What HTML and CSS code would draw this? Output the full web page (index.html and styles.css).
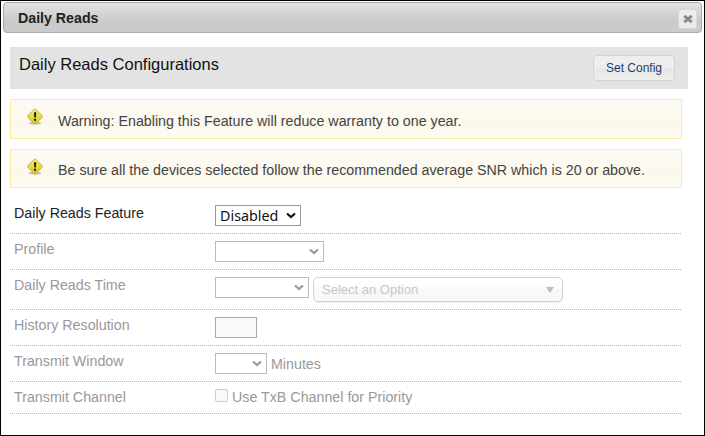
FILE: index.html
```html
<!DOCTYPE html>
<html lang="en">
<head>
<meta charset="utf-8">
<title>Daily Reads</title>
<link rel="stylesheet" href="styles.css">
</head>
<body>
<svg class="defs" aria-hidden="true">
  <defs>
    <linearGradient id="gold" x1="0" y1="0" x2="1" y2="1"><stop offset="0" stop-color="#f8f38a"/><stop offset="0.5" stop-color="#e6dc40"/><stop offset="1" stop-color="#d0c01f"/></linearGradient>
    <symbol id="warn" viewBox="0 0 18 18">
      <ellipse cx="9" cy="15.2" rx="6" ry="1.6" fill="#aaa896" opacity=".7"/>
      <rect x="3.4" y="2.9" width="11.2" height="11.2" rx="1.3" transform="rotate(45 9 8.5)" fill="url(#gold)" stroke="#c4b030" stroke-width=".9"/>
      <path d="M8 4.2h2.2L9.9 9.5H8.3zM8 10.7h2v2H8z" fill="#1a1a1a"/>
    </symbol>
    <symbol id="chev" viewBox="0 0 10 7"><path d="M1 1.5L5 5L9 1.5" fill="none" stroke="currentColor" stroke-width="2.2"/></symbol>
  </defs>
</svg>
<div class="dialog">
  <header class="titlebar">
    <span class="title">Daily Reads</span>
    <button class="close" aria-label="Close"><svg width="10" height="10" viewBox="0 0 10 10"><path d="M1.3 1.8L8.7 8.2M8.7 1.8L1.3 8.2" stroke="#888" stroke-width="3"/></svg></button>
  </header>
  <main class="content">
    <div class="heading"><h1>Daily Reads Configurations</h1><button class="set">Set Config</button></div>
    <div class="notice first"><svg class="icon"><use href="#warn"/></svg><span>Warning: Enabling this Feature will reduce warranty to one year.</span></div>
    <div class="notice"><svg class="icon"><use href="#warn"/></svg><span>Be sure all the devices selected follow the recommended average SNR which is 20 or above.</span></div>
    <div class="form">
      <div class="row on"><label>Daily Reads Feature</label><div class="field"><div class="select w86"><span>Disabled</span><svg class="chev"><use href="#chev"/></svg></div></div></div>
      <div class="row"><label>Profile</label><div class="field"><div class="select w109"><svg class="chev"><use href="#chev"/></svg></div></div></div>
      <div class="row tall"><label>Daily Reads Time</label><div class="field"><div class="select w94"><svg class="chev"><use href="#chev"/></svg></div><div class="chosen"><span>Select an Option</span><i></i></div></div></div>
      <div class="row"><label>History Resolution</label><div class="field"><div class="input"></div></div></div>
      <div class="row"><label>Transmit Window</label><div class="field"><div class="select w52"><svg class="chev"><use href="#chev"/></svg></div><span class="txt">Minutes</span></div></div>
      <div class="row short"><label>Transmit Channel</label><div class="field"><div class="check"></div><span class="txt up">Use TxB Channel for Priority</span></div></div>
    </div>
  </main>
</div>
</body>
</html>
```
FILE: styles.css
```css
* { box-sizing: border-box; }
body { margin: 0; background: #fff; font-family: "Liberation Sans", Arial, sans-serif; font-size: 14.25px; color: #333; }
.defs { position: absolute; width: 0; height: 0; }
.dialog { width: 705px; height: 436px; border: 1px solid #000; padding: 1px 2px; overflow: hidden; }
.titlebar { height: 31px; border: 1px solid #aaa; border-radius: 4px; background: linear-gradient(#e2e2e2, #cbcbcb 60%, #cbcbcb); display: flex; align-items: center; justify-content: space-between; padding: 0 4px 0 14px; }
.title { font-weight: bold; font-size: 14.2px; color: #222; line-height: 28px; }
.close { width: 19px; height: 20px; margin-top: 2px; padding: 0; border: 1px solid #d8d8d8; border-radius: 3px; background: linear-gradient(#ededed 50%, #e6e6e6 50%, #eee); display: flex; align-items: center; justify-content: center; }
.content { padding: 14px 0 0 7px; }
.heading { width: 678px; height: 42px; background: #e3e3e3; display: flex; justify-content: space-between; padding: 8px 13px 0 9px; }
.heading h1 { margin: 0; font-size: 16.5px; font-weight: normal; line-height: 19px; color: #111; white-space: nowrap; }
.set { width: 82px; height: 26px; border: 1px solid #d3d3d3; border-radius: 4px; background: linear-gradient(#eeeeee 50%, #e6e6e6 50%, #eee); color: #1d3e6e; font: 12px/22px "Liberation Sans", Arial, sans-serif; padding: 0; }
.notice { width: 672px; height: 39px; margin-top: 10px; border: 1px solid #fbec9d; background: linear-gradient(#fdfaf3, #fcf9f0 50%, #fbf8ea 55%, #fdfbf3); display: flex; padding: 8px 0 0 15px; color: #444; }
.notice.first { height: 40px; }
.notice.first span { line-height: 27px; }
.icon { width: 18px; height: 18px; margin-right: 14px; flex: none; }
.notice span { line-height: 25px; white-space: nowrap; }
.form { margin-top: 10px; width: 672px; }
.row { height: 36px; display: flex; padding: 7px 0 0 4px; color: #999; background: linear-gradient(90deg, #b5b5b5 50%, transparent 50%) 0 100% / 2px 1px repeat-x; }
.row.tall { height: 40px; }
.row.short { height: 32px; }
.row label { width: 201px; line-height: 17px; }
.row.on label { color: #222; }
.field { display: flex; align-items: flex-start; }
.select { height: 21px; border: 1px solid #bbb; display: flex; justify-content: flex-end; align-items: center; padding-right: 4px; }
.on .select { border-color: #999; color: #111; justify-content: space-between; padding-left: 4px; }
.select span { font: 14.3px/19px "Noto Sans", sans-serif; }
.chev { width: 10px; height: 7px; }
.w86 { width: 86px; }
.w109 { width: 109px; }
.w94 { width: 94px; }
.w52 { width: 52px; }
.chosen { margin-left: 4px; width: 250px; height: 25px; border: 1px solid #d2d2d2; border-radius: 5px; background: linear-gradient(#fff 20%, #fafafa 50%, #f7f7f7 52%, #f9f9f9); box-shadow: 0 1px 1px #eee; display: flex; justify-content: space-between; align-items: center; padding: 0 8px; color: #c8c8c8; font-size: 13px; }
.chosen i { border: 4px solid transparent; border-top: 6px solid #bbb; border-bottom: 0; }
.input { width: 42px; height: 21px; border: 1px solid #aaa; background: #fafafa; }
.txt { margin-left: 4px; line-height: 23px; white-space: nowrap; }
.up { line-height: 17px; }
.check { width: 13px; height: 13px; border: 1px solid #ccc; border-radius: 2px; background: #f9f9f9; }
```
